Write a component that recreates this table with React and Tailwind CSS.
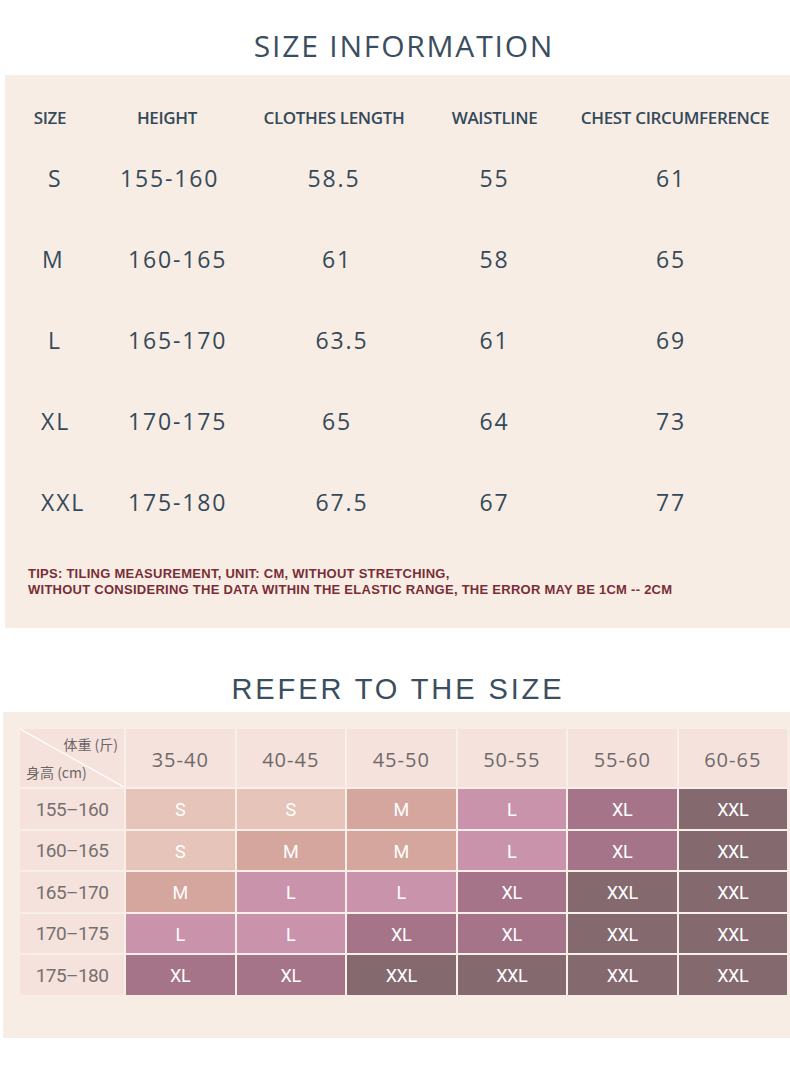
const SIZES = [
  { size: "S", height: "155-160", length: "58.5", waist: "55", chest: "61", sx: "pl-[43px]", hx: "pl-[25px]", lx: "pl-0" },
  { size: "M", height: "160-165", length: "61", waist: "58", chest: "65", sx: "pl-[37px]", hx: "pl-[33px]", lx: "pl-[6px]" },
  { size: "L", height: "165-170", length: "63.5", waist: "61", chest: "69", sx: "pl-[43px]", hx: "pl-[33px]", lx: "pl-[16px]" },
  { size: "XL", height: "170-175", length: "65", waist: "64", chest: "73", sx: "pl-[36px]", hx: "pl-[33px]", lx: "pl-[6px]" },
  { size: "XXL", height: "175-180", length: "67.5", waist: "67", chest: "77", sx: "pl-[36px]", hx: "pl-[33px]", lx: "pl-[16px]" },
];

const WEIGHTS = ["35-40", "40-45", "45-50", "50-55", "55-60", "60-65"];

const REFER = [
  { h: "155–160", s: ["S", "S", "M", "L", "XL", "XXL"] },
  { h: "160–165", s: ["S", "M", "M", "L", "XL", "XXL"] },
  { h: "165–170", s: ["M", "L", "L", "XL", "XXL", "XXL"] },
  { h: "170–175", s: ["L", "L", "XL", "XL", "XXL", "XXL"] },
  { h: "175–180", s: ["XL", "XL", "XXL", "XXL", "XXL", "XXL"] },
];

const cellColor = {
  S: "bg-[#e6c4ba]",
  M: "bg-[#d5a69d]",
  L: "bg-[#c994ab]",
  XL: "bg-[#a57489]",
  XXL: "bg-[#846a6f]",
};

const cols = "grid grid-cols-[90px_144px_190px_131px_230px]";

export default function App() {
  return (
    <div className="w-[790px] h-[1080px] bg-white overflow-hidden font-['Open_Sans',sans-serif]">
      {/* size information */}
      <div className="h-[75px] flex items-center justify-center pt-[16px] pl-[18px]">
        <h1 className="text-[30px] tracking-[0.06em] text-[#3a4e5f] font-medium">SIZE INFORMATION</h1>
      </div>
      <div className="ml-[5px] h-[553px] bg-[#f7ede4] pt-[30px]">
        <div className={`${cols} h-[24px] items-center text-center text-[17px] font-semibold text-[#34495a] tracking-[-0.02em]`}>
          <div>SIZE</div>
          <div>HEIGHT</div>
          <div>CLOTHES LENGTH</div>
          <div>WAISTLINE</div>
          <div>CHEST CIRCUMFERENCE</div>
        </div>
        <div className="mt-[9px]">
          {SIZES.map(r => (
            <div key={r.size} className={`${cols} h-[81px] items-center text-[23px] font-medium tracking-[0.08em] text-[#34495a]`}>
              <div className={r.sx}>{r.size}</div>
              <div className={r.hx}>{r.height}</div>
              <div className={`${r.lx} text-center`}>{r.length}</div>
              <div className="text-center">{r.waist}</div>
              <div className="pr-[8px] text-center">{r.chest}</div>
            </div>
          ))}
        </div>
        <div className="mt-[23px] pl-[23px] font-['Liberation_Sans',sans-serif] text-[13px] font-bold leading-[16px] tracking-[0.02em] text-[#7a2d36]">
          <div>TIPS: TILING MEASUREMENT, UNIT: CM, WITHOUT STRETCHING,</div>
          <div>WITHOUT CONSIDERING THE DATA WITHIN THE ELASTIC RANGE, THE ERROR MAY BE 1CM -- 2CM</div>
        </div>
      </div>

      {/* refer to the size */}
      <div className="h-[84px] flex items-end justify-center pb-[1px] pl-[6px]">
        <h2 className="font-['Liberation_Sans',sans-serif] text-[29px] tracking-[0.1em] text-[#3a4e5f]">REFER TO THE SIZE</h2>
      </div>
      <div className="ml-[3px] h-[326px] bg-[#f7ede4] pt-[17px] pl-[17px]">
        <div className="w-[767px] grid grid-cols-[104px_repeat(6,1fr)] grid-rows-[58px_repeat(5,39.5px)] gap-[2px] bg-[#f9efe9]">
          <div className="relative bg-[#f5e2dc] overflow-hidden">
            <svg className="absolute inset-0" width="104" height="58" viewBox="0 0 104 58">
              <line x1="0" y1="0" x2="104" y2="58" stroke="#ffffff" strokeWidth="1.2" />
            </svg>
            <div className="absolute right-[6px] top-[5px] text-[14px] text-[#6b6565] font-['Noto_Sans_CJK_SC',sans-serif]">体重 (斤)</div>
            <div className="absolute left-[6px] bottom-[4px] text-[14px] text-[#6b6565] font-['Noto_Sans_CJK_SC',sans-serif]">身高 (cm)</div>
          </div>
          {WEIGHTS.map(w => (
            <div key={w} className="bg-[#f5e2dc] flex items-center justify-center pt-[4px] text-[20px] tracking-[0.05em] text-[#6e6a6a]">{w}</div>
          ))}
          {REFER.map(r => (
            <div key={r.h} className="contents">
              <div className="bg-[#f5e2dc] flex items-center justify-center pt-[2px] font-['Roboto',sans-serif] text-[19px] text-[#757070] tracking-[-0.03em]">{r.h}</div>
              {r.s.map((s, i) => (
                <div key={i} className={`${cellColor[s]} flex items-center justify-center pt-[2px] font-['Roboto',sans-serif] text-[18px] text-white tracking-[-0.02em]`}>{s}</div>
              ))}
            </div>
          ))}
        </div>
      </div>
    </div>
  );
}
